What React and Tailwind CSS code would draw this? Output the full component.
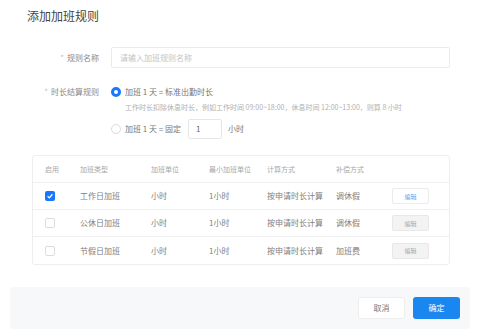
const font = { fontFamily: '"Noto Sans CJK SC", "Noto Sans", sans-serif' };

const rows = [
    { type: "工作日加班", unit: "小时", min: "1小时", calc: "按申请时长计算", comp: "调休假", on: true },
    { type: "公休日加班", unit: "小时", min: "1小时", calc: "按申请时长计算", comp: "调休假", on: false },
    { type: "节假日加班", unit: "小时", min: "1小时", calc: "按申请时长计算", comp: "加班费", on: false }
];

const Label = ({ children }) => (
    <div className="w-[99px] shrink-0 text-right text-[8px] text-[#8a8a8a]">
        <span className="mr-[3px] text-[#c4c4c4]">*</span>{children}
    </div>
);

const Radio = ({ checked }) => (
    checked
        ? <span className="w-[10px] h-[10px] rounded-full border-[3px] border-[#1677ff] bg-white shrink-0" />
        : <span className="w-[10px] h-[10px] rounded-full border border-[#dcdcdc] bg-white shrink-0" />
);

const Check = ({ checked }) => (
    checked
        ? <span className="w-[10px] h-[10px] rounded-[2px] bg-[#1677ff] flex items-center justify-center">
            <svg width="8" height="8" viewBox="0 0 10 10"><path d="M2 5.2 L4.2 7.3 L8 2.8" stroke="white" strokeWidth="1.6" fill="none" /></svg>
        </span>
        : <span className="w-[10px] h-[10px] rounded-[2px] border border-[#dcdcdc] bg-white" />
);

export default function App() {
    return (
        <div className="w-[500px] h-[334px] bg-white overflow-hidden" style={font}>
            <div className="pt-[8px] h-[24px] flex">
                <span className="ml-[27px] text-[12px] leading-[16px] text-[#444]">添加加班规则</span>
            </div>

            <div className="mt-[23px] flex items-center">
                <Label>规则名称</Label>
                <div className="ml-[12px] w-[339px] h-[21px] border border-[#ebebeb] rounded-[2px] flex items-center pl-[8px] text-[8px] text-[#c4c4c4]">
                    请输入加班规则名称
                </div>
            </div>

            <div className="mt-[17px] flex">
                <div className="h-[14px] flex items-center"><Label>时长结算规则</Label></div>
                <div className="ml-[12px] flex flex-col">
                    <div className="h-[14px] flex items-center gap-[4px] text-[8px] text-[#777]">
                        <Radio checked />
                        <span>加班 1 天 = 标准出勤时长</span>
                    </div>
                    <div className="mt-[3px] pl-[14px] h-[10px] leading-[10px] text-[7px] text-[#b0b0b0] whitespace-nowrap">
                        工作时长扣除休息时长，例如工作时间 09:00~18:00，休息时间 12:00~13:00，则算 8 小时
                    </div>
                    <div className="mt-[7px] h-[20px] flex items-center gap-[4px] text-[8px] text-[#777]">
                        <Radio />
                        <span>加班 1 天 = 固定</span>
                        <div className="ml-[3px] w-[34px] h-[20px] border border-[#e6e6e6] rounded-[2px] flex items-center pl-[7px] text-[#666]">1</div>
                        <span className="ml-[2px]">小时</span>
                    </div>
                </div>
            </div>

            <div className="mt-[16px] ml-[32px] w-[418px] border border-[#eeeeee] rounded-[3px] text-[8px] text-[#808080]">
                <div className="h-[27px] flex items-center text-[7px] text-[#a8a8a8] border-b border-[#f0f0f0]">
                    <div className="w-[47px] pl-[12px]">启用</div>
                    <div className="w-[71px]">加班类型</div>
                    <div className="w-[58px]">加班单位</div>
                    <div className="w-[58px]">最小加班单位</div>
                    <div className="w-[69px]">计算方式</div>
                    <div className="w-[58px]">补偿方式</div>
                    <div className="flex-1" />
                </div>
                {rows.map((r, i) => (
                    <div key={i} className={`h-[27px] flex items-center ${i < rows.length - 1 ? 'border-b border-[#f0f0f0]' : ''}`}>
                        <div className="w-[47px] pl-[12px] flex items-center"><Check checked={r.on} /></div>
                        <div className="w-[71px]">{r.type}</div>
                        <div className="w-[58px]">{r.unit}</div>
                        <div className="w-[58px]">{r.min}</div>
                        <div className="w-[69px]">{r.calc}</div>
                        <div className="w-[56px]">{r.comp}</div>
                        <div className="flex-1">
                            {r.on
                                ? <div className="w-[37px] h-[16px] border border-[#ececec] rounded-[2px] bg-white flex items-center justify-center text-[6px] text-[#5b9be8]">编辑</div>
                                : <div className="w-[37px] h-[16px] border border-[#e8e8e8] rounded-[2px] bg-[#f3f3f3] flex items-center justify-center text-[6px] text-[#a5a5a5]">编辑</div>}
                        </div>
                    </div>
                ))}
            </div>

            <div className="mt-[22px] ml-[10px] w-[460px] h-[42px] bg-[#f7f8fa] flex items-center justify-end gap-[8px] pr-[10px]">
                <div className="w-[47px] h-[22px] rounded-[3px] bg-white border border-[#eee] flex items-center justify-center text-[8px] text-[#777]">取消</div>
                <div className="w-[47px] h-[22px] rounded-[3px] bg-[#1a87f0] flex items-center justify-center text-[8px] text-white">确定</div>
            </div>
        </div>
    );
}
